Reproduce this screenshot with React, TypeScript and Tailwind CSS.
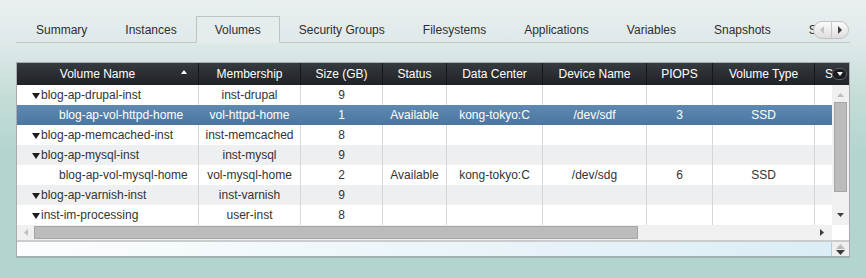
import React from "react";

type Row = {
  name: string;
  parent?: boolean;
  membership: string;
  size: string;
  status?: string;
  dc?: string;
  dev?: string;
  piops?: string;
  type?: string;
  selected?: boolean;
};

const tabs = ["Summary", "Instances", "Volumes", "Security Groups", "Filesystems", "Applications", "Variables", "Snapshots", "Scripts"];

const rows: Row[] = [
  { name: "blog-ap-drupal-inst", parent: true, membership: "inst-drupal", size: "9" },
  { name: "blog-ap-vol-httpd-home", membership: "vol-httpd-home", size: "1", status: "Available", dc: "kong-tokyo:C", dev: "/dev/sdf", piops: "3", type: "SSD", selected: true },
  { name: "blog-ap-memcached-inst", parent: true, membership: "inst-memcached", size: "8" },
  { name: "blog-ap-mysql-inst", parent: true, membership: "inst-mysql", size: "9" },
  { name: "blog-ap-vol-mysql-home", membership: "vol-mysql-home", size: "2", status: "Available", dc: "kong-tokyo:C", dev: "/dev/sdg", piops: "6", type: "SSD" },
  { name: "blog-ap-varnish-inst", parent: true, membership: "inst-varnish", size: "9" },
  { name: "inst-im-processing", parent: true, membership: "user-inst", size: "8" },
];

// column widths, in order after the name column
const cols = [
  { label: "Membership", w: "w-[102px]" },
  { label: "Size (GB)", w: "w-[82px]" },
  { label: "Status", w: "w-[64px]" },
  { label: "Data Center", w: "w-[96px]" },
  { label: "Device Name", w: "w-[104px]" },
  { label: "PIOPS", w: "w-[66px]" },
  { label: "Volume Type", w: "w-[102px]" },
];

function Tri({ dir, color, w = 8, h = 5 }: { dir: "up" | "down" | "left" | "right"; color: string; w?: number; h?: number }) {
  const pts =
    dir === "down" ? `0,0 ${w},0 ${w / 2},${h}` :
    dir === "up" ? `0,${h} ${w},${h} ${w / 2},0` :
    dir === "left" ? `${w},0 ${w},${h} 0,${h / 2}` :
    `0,0 0,${h} ${w},${h / 2}`;
  return (
    <svg width={w} height={h} viewBox={`0 0 ${w} ${h}`} className="block shrink-0">
      <polygon points={pts} fill={color} />
    </svg>
  );
}

function TabBar() {
  return (
    <div className="relative mx-[16px] h-[27px] border-b border-[#c3c6c8]">
      <div className="flex h-[27px] overflow-hidden pl-[1px]">
        {tabs.map(t => (
          <div
            key={t}
            className={
              "flex h-[27px] shrink-0 items-center border px-[18px] pt-[1px] text-[12px] text-[#2e2e2e] " +
              (t === "Volumes" ? "border-[#c0c2c4] border-b-transparent bg-[#e4ecee]" : "border-transparent")
            }
          >
            {t}
          </div>
        ))}
      </div>
      <div className="absolute right-[1px] top-[5px] flex h-[18px] w-[36px] overflow-hidden rounded-full border border-[#c2c2c2] bg-gradient-to-b from-[#fbfbfb] to-[#dedede]">
        <div className="flex flex-1 items-center justify-center border-r border-[#c8c8c8]">
          <Tri dir="left" color="#c4c4c4" w={4} h={8} />
        </div>
        <div className="flex flex-1 items-center justify-center">
          <Tri dir="right" color="#3c3c3c" w={4} h={8} />
        </div>
      </div>
    </div>
  );
}

function Header() {
  return (
    <div className="flex h-[22px] bg-gradient-to-b from-[#363b40] to-[#1f2226] text-[12px] text-white">
      <div className="relative flex w-[182px] shrink-0 items-center justify-center border-r border-[#15181b] pr-[20px]">
        Volume Name
        <span className="absolute right-[11px] top-[7px]">
          <Tri dir="up" color="#ffffff" w={6} h={4} />
        </span>
      </div>
      {cols.map(c => (
        <div key={c.label} className={`flex ${c.w} shrink-0 items-center justify-center border-r border-[#15181b]`}>
          {c.label}
        </div>
      ))}
      <div className="relative flex flex-1 items-center overflow-hidden pl-[10px]">
        <span className="whitespace-nowrap">S</span>
        <div className="absolute right-[2px] top-[5px] flex h-[12px] w-[15px] items-center justify-center rounded-full border border-[#5a5f64] bg-[#1b1e21]">
          <Tri dir="down" color="#ffffff" w={6} h={4} />
        </div>
      </div>
    </div>
  );
}

function DataRow({ r, i }: { r: Row; i: number }) {
  const bg = r.selected
    ? "bg-gradient-to-b from-[#5d89b2] to-[#4a769f] text-white"
    : i % 2 === 0
      ? "bg-white text-[#333]"
      : "bg-[#eeeff1] text-[#333]";
  const line = r.selected ? "border-transparent" : "border-[#d6d6d6]";
  const vals = [r.membership, r.size, r.status, r.dc, r.dev, r.piops, r.type];
  return (
    <div className={`flex h-[20px] text-[12px] ${bg}`}>
      <div className={`flex w-[182px] shrink-0 items-center border-r ${line} ${r.parent ? "pl-[15px]" : "pl-[42px]"}`}>
        {r.parent && (
          <span className="mr-[1px] mt-[2px]">
            <Tri dir="down" color="#1e1e1e" w={8} h={6} />
          </span>
        )}
        <span className="whitespace-nowrap">{r.name}</span>
      </div>
      {cols.map((c, k) => (
        <div key={c.label} className={`flex ${c.w} shrink-0 items-center justify-center border-r ${line} whitespace-nowrap`}>
          {vals[k] ?? ""}
        </div>
      ))}
      <div className="flex-1" />
    </div>
  );
}

function VScroll() {
  return (
    <div className="flex w-[17px] shrink-0 flex-col items-center bg-[#f0f0f0]">
      <div className="flex h-[17px] items-center justify-center pt-[2px]">
        <Tri dir="up" color="#bdbdbd" w={7} h={4} />
      </div>
      <div className="h-[90px] w-[13px] border border-[#a6a6a6] bg-[#bcbcbc]" />
      <div className="flex-1" />
      <div className="flex h-[17px] items-center justify-center pb-[4px]">
        <Tri dir="down" color="#3f3f3f" w={7} h={4} />
      </div>
    </div>
  );
}

function HScroll() {
  return (
    <div className="flex h-[17px] border-b-2 border-[#c9cbcc]">
      <div className="flex flex-1 items-center bg-[#f0f0f0]">
        <div className="flex w-[17px] items-center justify-center pl-[1px]">
          <Tri dir="left" color="#c0c0c0" w={4} h={7} />
        </div>
        <div className="h-[13px] w-[604px] border border-[#a6a6a6] bg-[#bcbcbc]" />
        <div className="flex-1" />
        <div className="flex w-[17px] items-center justify-center pr-[3px]">
          <Tri dir="right" color="#3f3f3f" w={4} h={7} />
        </div>
      </div>
      <div className="w-[17px] bg-white" />
    </div>
  );
}

function Footer() {
  return (
    <div className="flex h-[16px] border-b-2 border-[#9fb3b3]">
      <div className="flex-1 border-r border-[#a6d3e6] bg-gradient-to-r from-[#fbfdfe] to-[#dcedf5]" />
      <div className="flex w-[17px] flex-col items-center justify-center gap-[1px] bg-[#efefef]">
        <Tri dir="up" color="#bcbcbc" w={9} h={5} />
        <Tri dir="down" color="#3c3c3c" w={9} h={5} />
      </div>
    </div>
  );
}

export default function App() {
  return (
    <div className="h-[278px] w-[866px] overflow-hidden bg-[linear-gradient(to_bottom,#e9eff1_0%,#dfe9ea_15%,#c4dcd8_35%,#b4d5cf_55%,#b3d5cf_100%)] pt-[16px] font-['Liberation_Sans',Arial,sans-serif]">
      <TabBar />
      <div className="mx-[16px] mt-[19px] border border-[#a9acae] border-b-0">
        <Header />
        <div className="flex">
          <div className="flex-1">
            {rows.map((r, i) => (
              <DataRow key={r.name} r={r} i={i} />
            ))}
          </div>
          <VScroll />
        </div>
        <HScroll />
        <Footer />
      </div>
    </div>
  );
}
